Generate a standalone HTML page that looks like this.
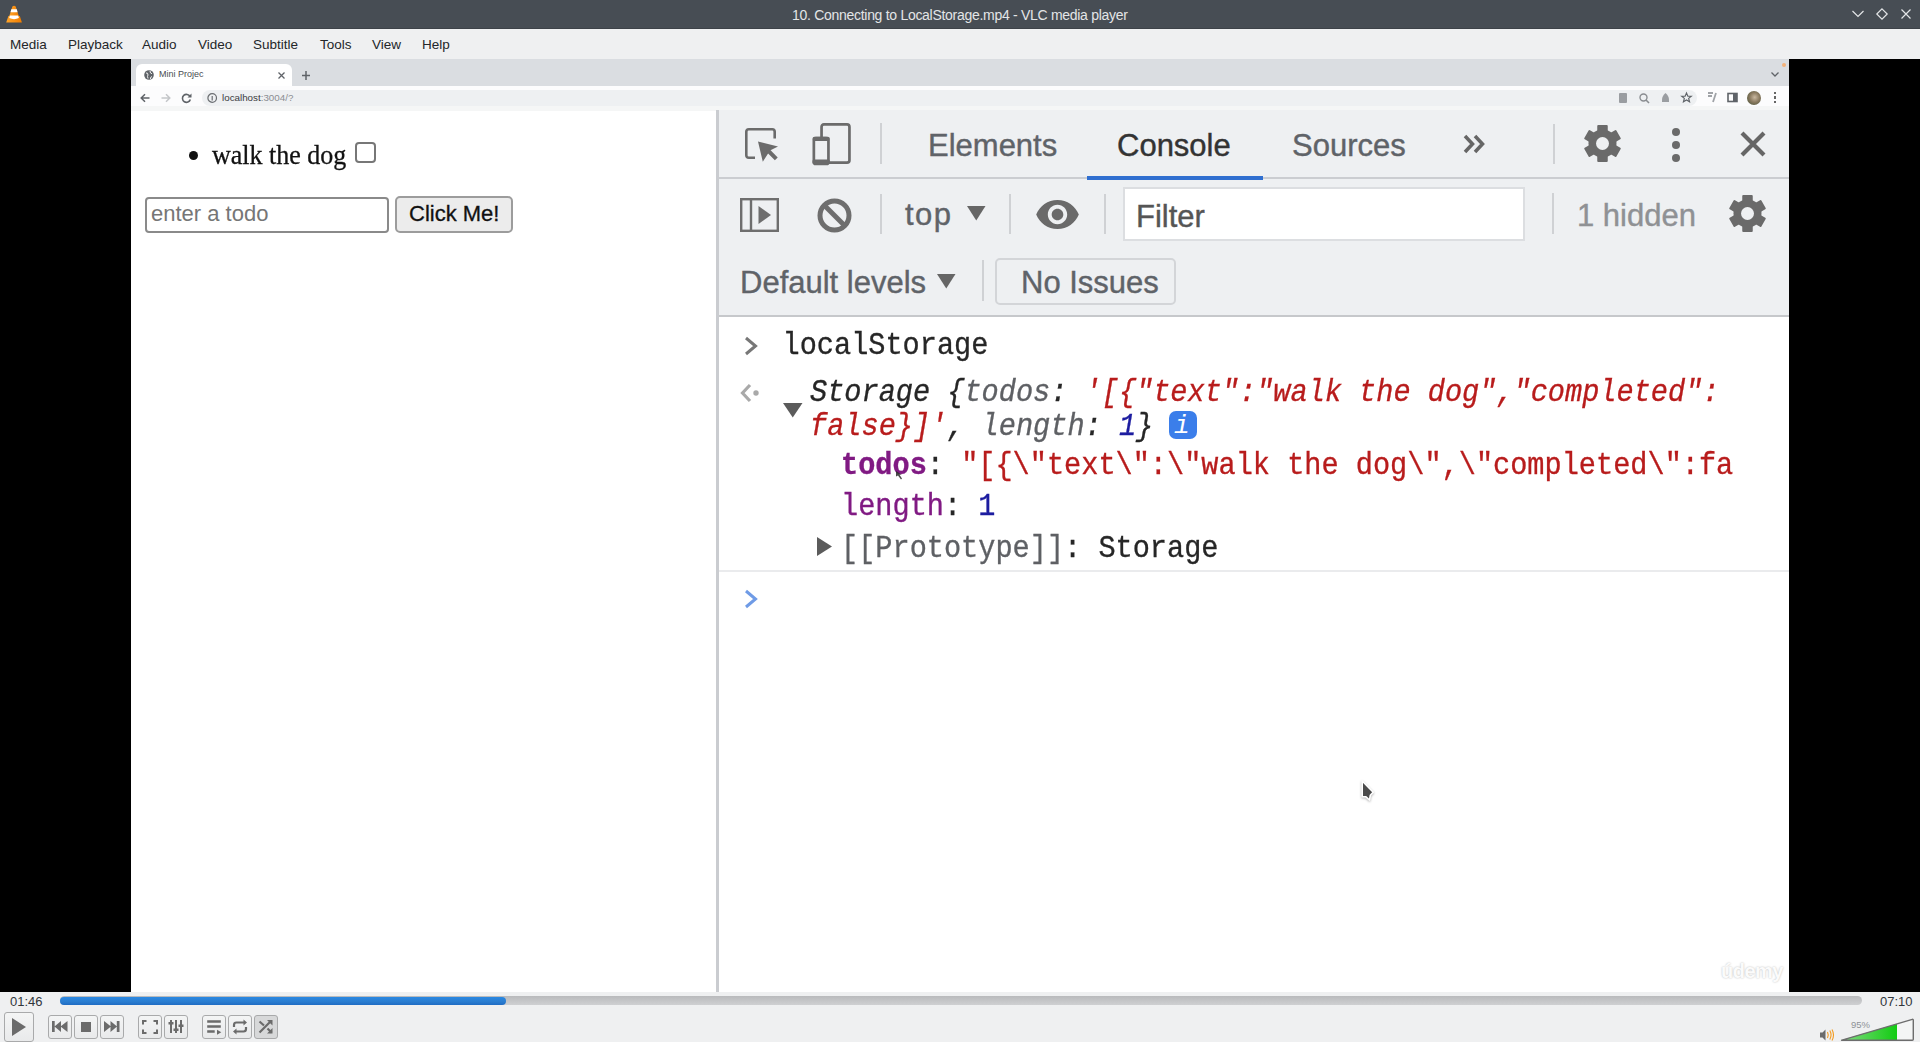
<!DOCTYPE html>
<html><head><meta charset="utf-8">
<style>
html,body{margin:0;padding:0;}
body{width:1920px;height:1042px;overflow:hidden;position:relative;background:#eff0f1;font-family:"Liberation Sans",sans-serif;}
.a{position:absolute;}
.t{position:absolute;white-space:pre;line-height:1;}
.mono{font-family:"Liberation Mono",monospace;}
.serif{font-family:"Liberation Serif",serif;}
svg{position:absolute;overflow:visible;}
.mi{position:absolute;white-space:pre;line-height:1;top:38px;font-size:13.5px;color:#232629;}
.tab{position:absolute;white-space:pre;line-height:1;top:130px;font-size:31px;color:#5f6368;-webkit-text-stroke:0.4px currentColor;}
.sep{position:absolute;width:2px;background:#cfd1d4;}
.dt{position:absolute;white-space:pre;line-height:1;font-size:31px;color:#5f6368;-webkit-text-stroke:0.4px currentColor;}
.cl{position:absolute;white-space:pre;line-height:1;font-family:"Liberation Mono",monospace;font-size:28.6px;color:#262626;-webkit-text-stroke:0.3px currentColor;transform:scaleY(1.09);transform-origin:0 21.9px;}
.red{color:#b81c1c;} .gry{color:#5e6064;} .blu{color:#1d1da0;} .pur{color:#801a83;} .dk{color:#262626;}
.btn{position:absolute;box-sizing:border-box;border:1px solid #a9aaab;border-radius:3px;background:linear-gradient(#f4f5f5,#e9eaeb);}
</style></head><body>

<!-- ===== Title bar ===== -->
<div class="a" style="left:0;top:0;width:1920px;height:29px;background:#474d54;"></div>
<div class="a" style="left:0;top:28px;width:1920px;height:1px;background:#3d4248;"></div>
<svg style="left:0;top:0" width="30" height="29" viewBox="0 0 30 29">
  <defs><linearGradient id="cg" x1="0" x2="1"><stop offset="0" stop-color="#ffa52a"/><stop offset="1" stop-color="#f07c00"/></linearGradient></defs>
  <path d="M12.4 6.4 Q14.05 4.9 15.7 6.4 L19.6 18.5 L8.5 18.5 Z" fill="url(#cg)"/>
  <path d="M8.4 16 L19.8 16 L21.9 22.5 L6.2 22.5 Z" fill="url(#cg)"/>
  <path d="M11.3 9.2 L16.8 9.2 L17.6 12.2 L10.5 12.2 Z" fill="#fff"/>
  <path d="M9.9 15.4 L18.2 15.4 L18.9 18 Q14.1 20.3 9.2 18 Z" fill="#fff"/>
</svg>
<div class="t" id="title" style="left:792px;top:7.5px;font-size:14px;letter-spacing:-0.29px;color:#e3e5e7;">10. Connecting to LocalStorage.mp4 - VLC media player</div>
<svg style="left:1852px;top:10px" width="12" height="8"><path d="M0.5 1 L6 6.5 L11.5 1" stroke="#e3e5e7" stroke-width="1.2" fill="none"/></svg>
<svg style="left:1876px;top:8px" width="12" height="12"><path d="M6 0.8 L11.2 6 L6 11.2 L0.8 6 Z" stroke="#e3e5e7" stroke-width="1.2" fill="none"/></svg>
<svg style="left:1901px;top:9px" width="10" height="10"><path d="M0.5 0.5 L9.5 9.5 M9.5 0.5 L0.5 9.5" stroke="#e3e5e7" stroke-width="1.2" fill="none"/></svg>

<!-- ===== Menu bar ===== -->
<div class="a" style="left:0;top:29px;width:1920px;height:30px;background:#eff0f1;"></div>
<div class="mi" style="left:10px;">Media</div>
<div class="mi" style="left:68px;">Playback</div>
<div class="mi" style="left:142px;">Audio</div>
<div class="mi" style="left:198px;">Video</div>
<div class="mi" style="left:253px;">Subtitle</div>
<div class="mi" style="left:320px;">Tools</div>
<div class="mi" style="left:372px;">View</div>
<div class="mi" style="left:422px;">Help</div>

<!-- ===== Video area ===== -->
<div class="a" style="left:0;top:59px;width:1920px;height:933px;background:#000;"></div>
<div class="a" style="left:131px;top:59px;width:1658px;height:933px;background:#fff;"></div>
<!-- tab strip -->
<div class="a" style="left:131px;top:59px;width:1658px;height:27px;background:#dadde1;"></div>
<div class="a" style="left:136px;top:64px;width:156px;height:23px;background:#fff;border-radius:6px 6px 0 0;"></div>
<svg style="left:144px;top:70px" width="10" height="10" viewBox="0 0 10 10"><circle cx="5" cy="5" r="4.8" fill="#5f6368"/><path d="M2 3 Q4 2.5 4 5 Q3 6 4 8.5 M6 1 Q6 3.5 8 3.8 M6.5 9 Q6 7 8 6.5" stroke="#fff" stroke-width="0.9" fill="none"/></svg>
<div class="t" style="left:159px;top:70px;font-size:9px;color:#4a4d51;">Mini Projec</div>
<svg style="left:278px;top:72px" width="7" height="7"><path d="M0.5 0.5 L6.5 6.5 M6.5 0.5 L0.5 6.5" stroke="#5f6368" stroke-width="1.3"/></svg>
<svg style="left:302px;top:71px" width="8" height="9"><path d="M4 0 V9 M0 4.5 H8" stroke="#5f6368" stroke-width="1.5"/></svg>
<svg style="left:1771px;top:72px" width="8" height="5"><path d="M0.5 0.5 L4 4 L7.5 0.5" stroke="#5f6368" stroke-width="1.3" fill="none"/></svg>
<div class="a" style="left:1782px;top:63px;width:3.5px;height:3.5px;border-radius:2px;background:#f3b27a;"></div>
<!-- toolbar -->
<div class="a" style="left:131px;top:86px;width:1658px;height:22px;background:#fcfcfd;"></div>
<div class="a" style="left:202px;top:89.5px;width:1495px;height:16.5px;background:#eef0f2;border-radius:8px;"></div>
<svg style="left:140px;top:93px" width="10" height="10"><path d="M9.5 5 H1.5 M5 1.2 L1.2 5 L5 8.8" stroke="#5f6368" stroke-width="1.5" fill="none"/></svg>
<svg style="left:161px;top:93px" width="10" height="10"><path d="M0.5 5 H8.5 M5 1.2 L8.8 5 L5 8.8" stroke="#c4c6c9" stroke-width="1.5" fill="none"/></svg>
<svg style="left:181px;top:93px" width="11" height="10"><path d="M9 3.5 A4 4 0 1 0 9.3 6.5" stroke="#5f6368" stroke-width="1.6" fill="none"/><path d="M10.5 0.5 V4.5 H6.5 Z" fill="#5f6368"/></svg>
<svg style="left:207px;top:93px" width="11" height="11"><circle cx="5.2" cy="5" r="4.3" stroke="#6a6d71" stroke-width="1.2" fill="none"/><path d="M5.2 3 V7.5" stroke="#6a6d71" stroke-width="1.2"/></svg>
<div class="t" style="left:222px;top:93px;font-size:9.8px;color:#3a3c40;">localhost<span style="color:#8b8e92">:3004/?</span></div>
<!-- right toolbar icons -->
<div class="a" style="left:1619px;top:93px;width:8px;height:10px;background:#9a9da1;border-radius:1px;"></div>
<svg style="left:1639px;top:93px" width="11" height="11"><circle cx="4.5" cy="4.5" r="3.5" stroke="#8a8d91" stroke-width="1.4" fill="none"/><path d="M7 7 L10 10" stroke="#8a8d91" stroke-width="1.6"/></svg>
<svg style="left:1661px;top:92px" width="9" height="11"><path d="M4.5 1 Q8.5 4 8 10 H1 Q0.5 4 4.5 1Z" fill="#9a9da1"/></svg>
<svg style="left:1681px;top:92px" width="11" height="11" viewBox="0 0 24 24"><path d="M12 2 L15 9 L22.5 9.3 L16.7 14 L18.7 21.5 L12 17.3 L5.3 21.5 L7.3 14 L1.5 9.3 L9 9 Z" stroke="#5f6368" stroke-width="2.5" fill="none"/></svg>
<svg style="left:1707px;top:92px" width="10" height="11"><path d="M1 1 H6 M1 4 H5 M9 1 L6 10" stroke="#a0a3a7" stroke-width="1.8"/></svg>
<svg style="left:1727px;top:92px" width="11" height="11"><rect x="1" y="1.5" width="9" height="8" stroke="#5f6368" stroke-width="1.6" fill="none"/><rect x="6" y="1.5" width="4" height="8" fill="#5f6368"/></svg>
<div class="a" style="left:1747px;top:91px;width:14px;height:14px;border-radius:7px;background:radial-gradient(circle at 55% 45%,#c9b8a0 0,#8a7a60 45%,#3e4a30 100%);"></div>
<div class="a" style="left:1774px;top:92px;width:2px;height:11px;background:linear-gradient(#666 0 20%,transparent 20% 40%,#666 40% 60%,transparent 60% 80%,#666 80%);"></div>
<div class="a" style="left:131px;top:106px;width:1658px;height:4.5px;background:#f5f6f6;"></div>

<!-- ===== page content ===== -->
<div class="a" style="left:189px;top:151px;width:9px;height:9px;border-radius:5px;background:#111;"></div>
<div class="t serif" style="left:212px;top:140.6px;font-size:27.5px;color:#111;transform:scaleX(0.945);transform-origin:0 0;-webkit-text-stroke:0.3px #111;">walk the dog</div>
<div class="a" style="left:355px;top:142px;width:21px;height:21px;box-sizing:border-box;border:2px solid #777;border-radius:4px;background:#fff;"></div>
<div class="a" style="left:145px;top:197px;width:244px;height:36px;box-sizing:border-box;border:2px solid #8a8a8a;border-radius:4px;background:#fff;"></div>
<div class="t" style="left:151px;top:203px;font-size:22px;color:#767676;">enter a todo</div>
<div class="a" style="left:395px;top:196px;width:118px;height:37px;box-sizing:border-box;border:2px solid #9c9c9c;border-radius:5px;background:#ececec;"></div>
<div class="t" style="left:409px;top:203px;font-size:22px;color:#111;-webkit-text-stroke:0.3px #111;">Click Me!</div>

<!-- ===== devtools ===== -->
<div class="a" style="left:716px;top:110px;width:3px;height:882px;background:#caccd0;"></div>
<div class="a" style="left:719px;top:110px;width:1070px;height:882px;background:#eef0f2;"></div>
<div class="a" style="left:719px;top:177px;width:1070px;height:2px;background:#cbcdd1;"></div>
<div class="a" style="left:1087px;top:176px;width:176px;height:4px;background:#2f6fd0;"></div>
<div class="a" style="left:719px;top:315px;width:1070px;height:2px;background:#c6c8cb;"></div>
<div class="a" style="left:719px;top:317px;width:1070px;height:675px;background:#fff;"></div>

<!-- tab bar icons -->
<svg style="left:745px;top:128px" width="34" height="34" viewBox="0 0 34 34">
  <path d="M10 29.7 H3.8 Q1.3 29.7 1.3 27.2 V3.8 Q1.3 1.3 3.8 1.3 H27.2 Q29.7 1.3 29.7 3.8 V10.4" stroke="#6b6b6b" stroke-width="2.6" fill="none"/>
  <path d="M13 13.4 L33 18.5 L25 22.5 L17.8 33.7 Z" fill="#6b6b6b"/>
  <path d="M22.5 22 L31.3 30.8" stroke="#6b6b6b" stroke-width="4"/>
</svg>
<svg style="left:812px;top:123px" width="40" height="42" viewBox="0 0 40 42">
  <path d="M9.55 14 V4 Q9.55 1.45 12 1.45 H35 Q37.45 1.45 37.45 4 V37.2 Q37.45 39.65 35 39.65 H17" stroke="#6b6b6b" stroke-width="2.7" fill="none"/>
  <path d="M4 15.05 H14 Q16.45 15.05 16.45 17.5 V39 Q16.45 41 14.5 41 H3.8 Q1.85 41 1.85 39 V17.5 Q1.85 15.05 4 15.05 Z" stroke="#6b6b6b" stroke-width="2.7" fill="none"/>
  <rect x="0.5" y="13.7" width="17.3" height="4.4" rx="2" fill="#6b6b6b"/>
  <rect x="0.5" y="36.4" width="17.3" height="4.6" rx="1.5" fill="#6b6b6b"/>
</svg>
<div class="sep" style="left:880px;top:123px;height:41px;"></div>
<div class="tab" style="left:928px;">Elements</div>
<div class="tab" style="left:1117px;color:#333;">Console</div>
<div class="tab" style="left:1292px;">Sources</div>
<svg style="left:1463px;top:134px" width="22" height="20"><path d="M2 2 L9.5 10 L2 18 M12 2 L19.5 10 L12 18" stroke="#666" stroke-width="3.5" fill="none"/></svg>
<div class="sep" style="left:1553px;top:124px;height:40px;"></div>
<svg style="left:1584px;top:125px" width="37" height="37" viewBox="-18.5 -18.5 37 37">
  <g fill="#6a6a6a"><circle r="14"/>
  <rect x="-5.25" y="-18.5" width="10.5" height="9" rx="1"/><rect x="-5.25" y="-18.5" width="10.5" height="9" rx="1" transform="rotate(60)"/><rect x="-5.25" y="-18.5" width="10.5" height="9" rx="1" transform="rotate(120)"/><rect x="-5.25" y="-18.5" width="10.5" height="9" rx="1" transform="rotate(180)"/><rect x="-5.25" y="-18.5" width="10.5" height="9" rx="1" transform="rotate(240)"/><rect x="-5.25" y="-18.5" width="10.5" height="9" rx="1" transform="rotate(300)"/></g>
  <circle r="6.5" fill="#eef0f2"/>
</svg>
<div class="a" style="left:1672px;top:128px;width:8px;height:8px;border-radius:4px;background:#6a6a6a;"></div>
<div class="a" style="left:1672px;top:141px;width:8px;height:8px;border-radius:4px;background:#6a6a6a;"></div>
<div class="a" style="left:1672px;top:154px;width:8px;height:8px;border-radius:4px;background:#6a6a6a;"></div>
<svg style="left:1740px;top:131px" width="26" height="26"><path d="M2 2 L24 24 M24 2 L2 24" stroke="#666" stroke-width="4.2"/></svg>

<!-- console toolbar row 1 -->
<svg style="left:740px;top:198px" width="39" height="34" viewBox="0 0 39 34">
  <rect x="1.2" y="1.2" width="36.6" height="31.6" stroke="#6e6e6e" stroke-width="2.4" fill="none"/>
  <path d="M11 1 V33" stroke="#6e6e6e" stroke-width="2.4"/>
  <path d="M18.5 8 L31 17 L18.5 26 Z" fill="#6e6e6e"/>
</svg>
<svg style="left:817px;top:198px" width="35" height="35" viewBox="0 0 35 35">
  <circle cx="17.5" cy="17.5" r="14.5" stroke="#6e6e6e" stroke-width="5" fill="none"/>
  <path d="M7.5 7.5 L27.5 27.5" stroke="#6e6e6e" stroke-width="5"/>
</svg>
<div class="sep" style="left:880px;top:194px;height:40px;"></div>
<div class="dt" style="left:905px;top:199px;letter-spacing:1.5px;">top</div>
<svg style="left:967px;top:206px" width="19" height="15"><path d="M0 0 H18.5 L9.25 14.5 Z" fill="#666"/></svg>
<div class="sep" style="left:1009px;top:194px;height:40px;"></div>
<svg style="left:1036px;top:199px" width="43" height="31" viewBox="1 4 22 16">
  <path fill="#6a6a6a" fill-rule="evenodd" d="M12 4.5C7 4.5 2.73 7.61 1 12c1.73 4.39 6 7.5 11 7.5s9.27-3.11 11-7.5c-1.73-4.39-6-7.5-11-7.5zM12 17c-2.76 0-5-2.24-5-5s2.24-5 5-5 5 2.24 5 5-2.24 5-5 5zm0-8c-1.66 0-3 1.34-3 3s1.34 3 3 3 3-1.34 3-3-1.34-3-3-3z"/>
</svg>
<div class="sep" style="left:1104px;top:194px;height:40px;"></div>
<div class="a" style="left:1123px;top:187px;width:402px;height:54px;box-sizing:border-box;border:2px solid #dcdee1;background:#fff;"></div>
<div class="dt" style="left:1136px;top:201px;color:#555;">Filter</div>
<div class="sep" style="left:1552px;top:193px;height:41px;"></div>
<div class="dt" style="left:1577px;top:200px;color:#8f9194;">1 hidden</div>
<svg style="left:1729px;top:195px" width="37" height="37" viewBox="-18.5 -18.5 37 37">
  <g fill="#6a6a6a"><circle r="14"/>
  <rect x="-5.25" y="-18.5" width="10.5" height="9" rx="1"/><rect x="-5.25" y="-18.5" width="10.5" height="9" rx="1" transform="rotate(60)"/><rect x="-5.25" y="-18.5" width="10.5" height="9" rx="1" transform="rotate(120)"/><rect x="-5.25" y="-18.5" width="10.5" height="9" rx="1" transform="rotate(180)"/><rect x="-5.25" y="-18.5" width="10.5" height="9" rx="1" transform="rotate(240)"/><rect x="-5.25" y="-18.5" width="10.5" height="9" rx="1" transform="rotate(300)"/></g>
  <circle r="6.5" fill="#eef0f2"/>
</svg>

<!-- console toolbar row 2 -->
<div class="dt" style="left:740px;top:267px;">Default levels</div>
<svg style="left:937px;top:274px" width="19" height="15"><path d="M0 0 H18.5 L9.25 14.5 Z" fill="#666"/></svg>
<div class="sep" style="left:982px;top:260px;height:41px;"></div>
<div class="a" style="left:995px;top:258px;width:181px;height:47px;box-sizing:border-box;border:2px solid #d3d5d8;border-radius:5px;"></div>
<div class="dt" style="left:1021px;top:267px;">No Issues</div>

<!-- console messages -->
<svg style="left:744px;top:336px" width="14" height="20"><path d="M2 2 L11.5 10 L2 18" stroke="#777" stroke-width="3" fill="none"/></svg>
<div class="cl" style="left:782.5px;top:333px;">localStorage</div>

<svg style="left:740px;top:383px" width="20" height="20"><path d="M10 2 L2.5 10 L10 18" stroke="#a9a9a9" stroke-width="3.2" fill="none"/><circle cx="16" cy="10" r="2.7" fill="#a9a9a9"/></svg>
<svg style="left:783px;top:403px" width="20" height="15"><path d="M0 0 H19.5 L9.75 14.5 Z" fill="#5b5b5b"/></svg>
<div class="cl" style="left:810px;top:379.5px;font-style:italic;"><span class="dk">Storage {</span><span class="gry">todos</span><span class="dk">: </span><span class="red">'[{"text":"walk the dog","completed":</span></div>
<div class="cl" style="left:810px;top:414px;font-style:italic;"><span class="red">false}]'</span><span class="dk">, </span><span class="gry">length</span><span class="dk">: </span><span class="blu">1</span><span class="dk">}</span></div>
<div class="a" style="left:1169px;top:411px;width:28px;height:28px;border-radius:7px;background:#3b7eea;"></div>
<div class="t mono" style="left:1174px;top:413px;font-size:26px;font-style:italic;color:#fff;">i</div>

<div class="cl" style="left:841px;top:452.5px;"><span class="pur" style="font-weight:bold">todos</span><span class="dk">: </span><span class="red">"[{\"text\":\"walk the dog\",\"completed\":fa</span></div>
<div class="cl" style="left:841px;top:493.5px;"><span class="pur">length</span><span class="dk">: </span><span class="blu">1</span></div>
<svg style="left:817px;top:537px" width="16" height="20"><path d="M0 0 L15 9.5 L0 19 Z" fill="#5b5b5b"/></svg>
<div class="cl" style="left:841px;top:535.5px;"><span class="gry">[[Prototype]]</span><span class="dk">: Storage</span></div>
<div class="a" style="left:719px;top:570px;width:1070px;height:2px;background:#eaebed;"></div>
<svg style="left:744px;top:589px" width="14" height="20"><path d="M2 2 L11.5 10 L2 18" stroke="#6f9be6" stroke-width="3" fill="none"/></svg>

<!-- udemy watermark -->
<div class="t" style="left:1721px;top:961px;font-size:20px;font-weight:bold;letter-spacing:-0.5px;color:#fbfbfb;text-shadow:0 0 2px rgba(0,0,0,0.28);">&#250;demy</div>

<!-- mouse cursor -->
<svg style="left:1360px;top:779px" width="16" height="24" viewBox="0 0 16 24">
  <path d="M2.2 2 V17.8 H6 L9.5 21 L10.3 16.3 L13.2 13.2 Z" fill="#4a4a4a" stroke="#fff" stroke-width="1.6" stroke-linejoin="round" style="filter:drop-shadow(0 1px 1px rgba(0,0,0,0.3))"/>
</svg>
<svg style="left:895px;top:470px" width="9" height="11" viewBox="0 0 9 11"><path d="M1 1 L1 6.5 L3 5.5 L6 9.5 L7 8.5 L4.5 4.8 L6.5 4.5 Z" fill="#2a2a2a" opacity="0.85"/></svg>

<!-- ===== Controls ===== -->
<div class="a" style="left:60px;top:996px;width:1802px;height:9px;background:linear-gradient(#b9babc,#cfd0d2);border-radius:5px;"></div>
<div class="a" style="left:60px;top:996.5px;width:446px;height:8.5px;background:linear-gradient(#2b89e2,#2a7ccf 60%,#1f6cc4);border-radius:4.5px;"></div>
<div class="t" style="left:10px;top:995px;font-size:13px;color:#31363b;">01:46</div>
<div class="t" style="left:1880px;top:995px;font-size:13px;color:#31363b;">07:10</div>

<div class="btn" style="left:4px;top:1012px;width:30px;height:30px;"></div>
<svg style="left:12px;top:1018px" width="15" height="19"><path d="M0 0 L14 9 L0 18 Z" fill="#6b6b6b"/></svg>
<div class="btn" style="left:48px;top:1015px;width:24px;height:24px;"></div>
<svg style="left:52px;top:1021px" width="16" height="11"><path d="M0 0 H2.7 V11 H0 Z M2.5 5.5 L9 0 V11 Z M8.5 5.5 L15.5 0 V11 Z" fill="#6b6b6b"/></svg>
<div class="btn" style="left:74px;top:1015px;width:24px;height:24px;"></div>
<div class="a" style="left:81px;top:1022px;width:10px;height:10px;background:#6b6b6b;"></div>
<div class="btn" style="left:100px;top:1015px;width:24px;height:24px;"></div>
<svg style="left:104px;top:1021px" width="16" height="11"><path d="M15.5 0 H12.8 V11 H15.5 Z M13 5.5 L6.5 0 V11 Z M7 5.5 L0 0 V11 Z" fill="#6b6b6b"/></svg>

<div class="btn" style="left:138px;top:1015px;width:24px;height:24px;"></div>
<svg style="left:142px;top:1020px" width="16" height="14"><path d="M1 4.5 V1 H4.5 M11.5 1 H15 V4.5 M15 9.5 V13 H11.5 M4.5 13 H1 V9.5" stroke="#6b6b6b" stroke-width="2" fill="none"/></svg>
<div class="btn" style="left:164px;top:1015px;width:24px;height:24px;"></div>
<svg style="left:168px;top:1019px" width="16" height="15"><path d="M3 1 V14 M8 1 V14 M13 1 V14" stroke="#6b6b6b" stroke-width="2"/><rect x="0.5" y="3" width="5" height="2.5" fill="#6b6b6b"/><rect x="5.5" y="9.5" width="5" height="2.5" fill="#6b6b6b"/><rect x="10.5" y="5.5" width="5" height="2.5" fill="#6b6b6b"/></svg>

<div class="btn" style="left:202px;top:1015px;width:24px;height:24px;"></div>
<svg style="left:207px;top:1020px" width="15" height="15"><path d="M0.2 1.5 H13.8 M0.2 6.5 H13.8 M0.2 11.5 H7.7" stroke="#6b6b6b" stroke-width="2.5"/><path d="M10 9.7 L14.3 12.2 L10 14.8 Z" fill="#6b6b6b"/></svg>
<div class="btn" style="left:228px;top:1015px;width:24px;height:24px;"></div>
<svg style="left:232px;top:1019px" width="16" height="16"><path d="M2 8 V6 Q2 3.5 4.5 3.5 H12 M14 8 V10 Q14 12.5 11.5 12.5 H4" stroke="#6b6b6b" stroke-width="2.2" fill="none"/><path d="M11.5 0.5 L15 3.5 L11.5 6.5 Z M4.5 9.5 L1 12.5 L4.5 15.5 Z" fill="#6b6b6b"/></svg>
<div class="btn" style="left:254px;top:1015px;width:24px;height:24px;background:#d7d8d9;border-color:#a8a9aa;"></div>
<svg style="left:258px;top:1019px" width="16" height="16"><path d="M1.5 13.5 L13 2 M1.5 2.5 L6 6.5 M9.5 9.5 L13.5 13.5" stroke="#6b6b6b" stroke-width="2.2" fill="none"/><path d="M9 1 H14.5 V6.5 Z M14.5 9 V14.5 H9 Z" fill="#6b6b6b"/></svg>

<!-- volume -->
<svg style="left:1820px;top:1029px" width="15" height="12"><path d="M0 3.5 H2.5 L5.5 0.5 V11.5 L2.5 8.5 H0 Z" fill="#6b6b6b"/><path d="M7.5 3 Q9 6 7.5 9 M9.8 1.5 Q12.3 6 9.8 10.5 M12 0.5 Q15 6 12 11.5" stroke="#f39a1e" stroke-width="1.1" fill="none"/></svg>
<svg style="left:1840px;top:1018px" width="75" height="24" viewBox="0 0 75 24">
  <defs><linearGradient id="vg" x1="0" x2="1"><stop offset="0" stop-color="#86da86"/><stop offset="1" stop-color="#12cc12"/></linearGradient>
  <clipPath id="vc"><path d="M1.5 22 L72 1.5 V22 Z"/></clipPath></defs>
  <rect x="0" y="0" width="57" height="24" fill="url(#vg)" clip-path="url(#vc)"/>
  <path d="M57 5.5 L72 1.5 V22 H57 Z" fill="#f4f5f5"/>
  <path d="M2 22.2 L72.3 1.3 Q73.3 1.2 73.3 2.2 V21.2 Q73.3 22.3 72.3 22.3 H2.5 Q1 22.3 2 22.2 Z" stroke="#6d6d6d" stroke-width="1.4" fill="none" stroke-linejoin="round"/>
</svg>
<div class="t" style="left:1851px;top:1020px;font-size:9.5px;color:#8e9296;">95%</div>

</body></html>
